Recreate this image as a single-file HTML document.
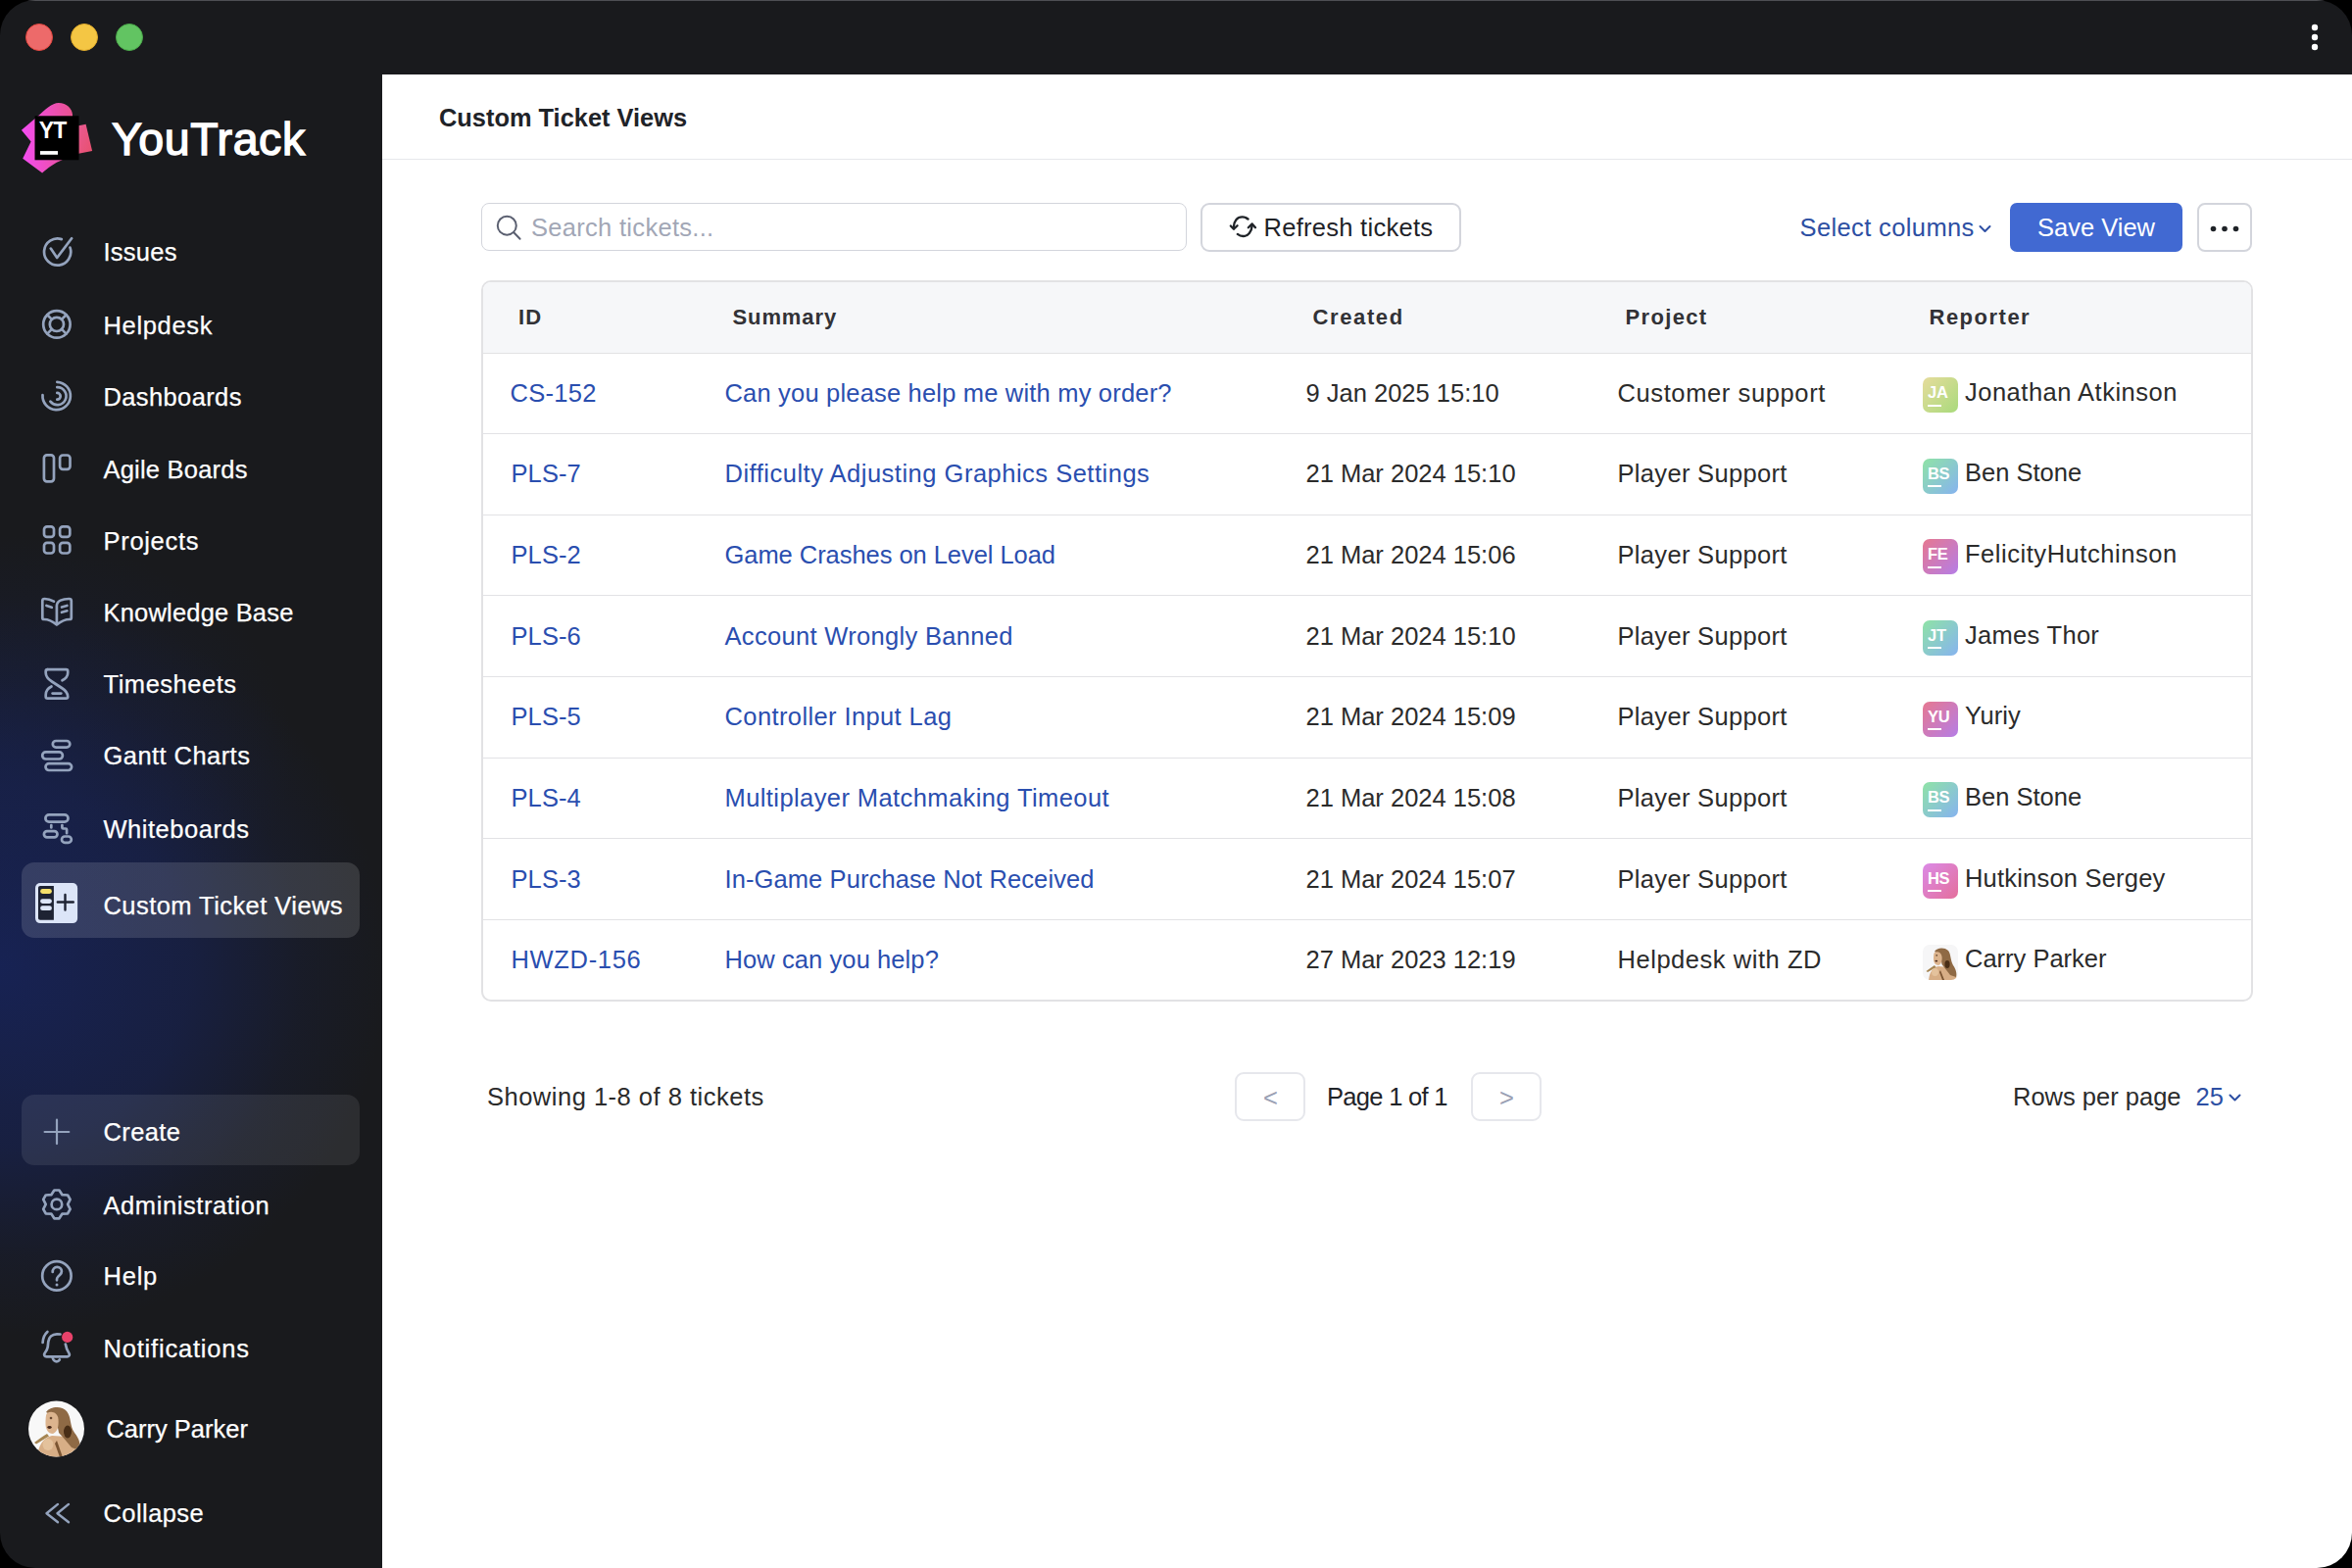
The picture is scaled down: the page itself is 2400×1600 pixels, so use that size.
<!DOCTYPE html>
<html>
<head>
<meta charset="utf-8">
<style>
*{box-sizing:border-box;margin:0;padding:0}
html,body{width:2400px;height:1600px;overflow:hidden;background:#000}
body{font-family:"Liberation Sans",sans-serif;position:relative}
.win{position:absolute;left:0;top:0;width:2400px;height:1600px;border-radius:36px;overflow:hidden;background:#191a1d}
.topline{position:absolute;left:0;top:0;width:2400px;height:1px;background:#4e4f54}
.tl{position:absolute;width:28px;height:28px;border-radius:50%;top:24px}
.side{position:absolute;left:0;top:76px;width:390px;height:1524px;overflow:hidden}
.glow{position:absolute;left:-430px;top:500px;width:860px;height:820px;border-radius:50%;
 background:radial-gradient(closest-side,rgba(23,35,88,0.92),rgba(23,35,88,0.6) 45%,rgba(23,35,88,0.18) 72%,rgba(23,35,88,0) 92%)}
.ni{position:absolute;left:0;width:390px;height:40px}
.ni svg{position:absolute;left:36px;top:0;width:44px;height:40px;overflow:visible}
.ni .t{position:absolute;left:106px;top:7px;font-size:26px;line-height:26px;color:#fff;white-space:nowrap}
.ic{fill:none;stroke:#94a3bd;stroke-width:2.7;stroke-linecap:round;stroke-linejoin:round}
.nt{position:absolute;left:105.5px;font-size:25.5px;line-height:26px;color:#fff;white-space:nowrap;-webkit-text-stroke:0.25px #fff}
.tx{font-size:25.5px;line-height:26px}
.td{font-size:25.5px;line-height:26px;color:#2b2b2b}
.lk{color:#2a4eaf}
.th{font-size:22px;line-height:26px;font-weight:700;letter-spacing:1.2px;color:#323236}
.av{width:36px;height:36px;border-radius:7px;overflow:hidden}
.av span{position:absolute;left:5px;top:7px;font-size:16.5px;line-height:16px;font-weight:700;color:#fff;letter-spacing:-0.3px}
.av i{position:absolute;left:5px;top:27.5px;width:14px;height:2px;background:#fff}
.main{position:absolute;left:390px;top:76px;width:2010px;height:1524px;background:#fff}
.abs{position:absolute;white-space:nowrap}
</style>
</head>
<body>
<div class="win">
  <div class="topline"></div>
  <div class="tl" style="left:26px;background:#ed6a6a;border:1px solid #e2463f"></div>
  <div class="tl" style="left:72px;background:#f4c644;border:1px solid #dea92a"></div>
  <div class="tl" style="left:118px;background:#62c462;border:1px solid #4aa84a"></div>
  <svg class="abs" style="left:2352px;top:20px" width="20" height="36" viewBox="0 0 20 36">
    <circle cx="10" cy="8" r="3.2" fill="#fff"/><circle cx="10" cy="18" r="3.2" fill="#fff"/><circle cx="10" cy="28" r="3.2" fill="#fff"/>
  </svg>


  <div class="side"><div class="glow"></div><div style="position:absolute;left:-300px;top:470px;width:600px;height:440px;border-radius:50%;background:radial-gradient(closest-side,rgba(23,35,88,0.35),rgba(23,35,88,0.15) 60%,rgba(23,35,88,0) 100%)"></div></div>
  <!-- logo -->
  <svg class="abs" style="left:18px;top:100px" width="82" height="82" viewBox="0 0 82 82">
    <defs>
      <linearGradient id="lg1" x1="0" y1="0" x2="1" y2="0"><stop offset="0" stop-color="#f34cf2"/><stop offset="1" stop-color="#e9528f"/></linearGradient>
      <linearGradient id="lg2" x1="0" y1="0" x2="1" y2="1"><stop offset="0" stop-color="#ea5a92"/><stop offset="1" stop-color="#e8506e"/></linearGradient>
    </defs>
    <path d="M3.9 32.7 L20.9 18.3 C28 12 35 5 41.8 5 C50 5 56 11 56 17.3 L56 40 L45.5 63.3 C38 66 30 72 25.1 76.6 L5.2 61.7 L13.6 44.5 Z" fill="url(#lg1)"/>
    <path d="M62.2 28.2 L69.6 26.7 L76.1 53.9 L62.2 56.7 Z" fill="url(#lg2)"/>
    <rect x="17.5" y="18.3" width="45" height="45" fill="#000"/>
    <text x="21.8" y="41.2" font-family="Liberation Sans" font-size="23" font-weight="700" fill="#fff" letter-spacing="-0.8">YT</text>
    <rect x="23" y="54.1" width="18" height="3.7" fill="#fff"/>
  </svg>
  <div class="abs" style="left:114px;top:118.5px;font-size:46.5px;line-height:46px;font-weight:400;color:#fff;letter-spacing:0.6px;-webkit-text-stroke:1.4px #fff">YouTrack</div>

  <!-- nav items -->
  <svg class="abs ic" style="left:36px;top:236px" width="44" height="44" viewBox="0 0 44 44">
    <path d="M26.8 8.1 A13.6 13.6 0 1 0 35.5 16.6" /><path d="M15.8 17.6 L22.2 27 L37.1 7.3"/>
  </svg>
  <div class="abs nt" style="top:243.5px;letter-spacing:0.26px">Issues</div>

  <svg class="abs ic" style="left:36px;top:310px" width="44" height="44" viewBox="0 0 44 44">
    <circle cx="21.9" cy="20.9" r="13.7"/><circle cx="21.9" cy="20.9" r="7.1"/>
    <path d="M12.2 11.2 L16.9 15.9 M31.6 11.2 L26.9 15.9 M12.2 30.6 L16.9 25.9 M31.6 30.6 L26.9 25.9"/>
  </svg>
  <div class="abs nt" style="top:318.5px;letter-spacing:0.66px">Helpdesk</div>

  <svg class="abs ic" style="left:36px;top:384px" width="44" height="44" viewBox="0 0 44 44">
    <path d="M22.3 5.8 A14.2 14.2 0 1 1 7.5 19" /><path d="M22.3 11.1 A9 9 0 1 1 15.4 25.6"/><path d="M22.3 16.9 A3.4 3.4 0 0 1 22.3 23.7"/>
  </svg>
  <div class="abs nt" style="top:391.5px;letter-spacing:0.38px">Dashboards</div>

  <svg class="abs ic" style="left:36px;top:456px" width="44" height="44" viewBox="0 0 44 44">
    <rect x="8.9" y="8.3" width="10.1" height="27" rx="3"/><rect x="25.1" y="8.5" width="10.4" height="14.3" rx="3"/>
  </svg>
  <div class="abs nt" style="top:465.5px;letter-spacing:0.21px">Agile Boards</div>

  <svg class="abs ic" style="left:36px;top:530px" width="44" height="44" viewBox="0 0 44 44">
    <rect x="9" y="7.3" width="10" height="10.6" rx="3"/><rect x="25.1" y="7.3" width="10.2" height="10.6" rx="3"/>
    <rect x="9" y="23.8" width="10" height="10.7" rx="3"/><rect x="25.1" y="23.8" width="10.2" height="10.7" rx="3"/>
  </svg>
  <div class="abs nt" style="top:538.5px;letter-spacing:0.69px">Projects</div>

  <svg class="abs ic" style="left:36px;top:604px" width="44" height="44" viewBox="0 0 44 44">
    <path d="M18.9 9.7 C16 8 13 7 9.5 7 C8 7 7.3 7.8 7.3 9 L7.3 26.5 C7.3 27.5 8 28 9 28 C13 28 17 29.5 21.9 33.5 C26.8 29.5 31 28 35 28 C36 28 36.8 27.5 36.8 26.5 L36.8 9 C36.8 7.8 36 7 34.5 7 C28 7 21.9 9 21.9 14.3 L21.9 33.5"/>
    <path d="M11.4 14 L16.8 15.8 M27 15.5 L32.4 14 M27 20.8 L32.4 19.3"/>
  </svg>
  <div class="abs nt" style="top:612.2px;letter-spacing:0.19px">Knowledge Base</div>

  <svg class="abs ic" style="left:36px;top:678px" width="44" height="44" viewBox="0 0 44 44">
    <path d="M12.5 5.1 L31.4 5.1 C32.6 5.1 33.2 5.8 33.2 7 L33.2 8.5 C33.2 12 30.5 14.8 27.5 16.3"/>
    <path d="M12.5 5.1 C11.4 5.1 10.7 5.8 10.7 7 L10.7 8.5 C10.7 13 13 15 17 17.5 L27 24 C31 26.5 33.2 29 33.2 33 C33.2 34.2 32.5 34.7 31.4 34.7 L12.5 34.7 C11.4 34.7 10.7 34.2 10.7 33 L10.7 31 C10.7 27 13.5 24 16.5 22.5"/>
    <path d="M17.6 29.6 L26.3 29.6"/>
  </svg>
  <div class="abs nt" style="top:684.9px;letter-spacing:0.53px">Timesheets</div>

  <svg class="abs ic" style="left:36px;top:751px" width="44" height="44" viewBox="0 0 44 44">
    <rect x="17.8" y="5" width="17.5" height="6.6" rx="3.3"/><rect x="7.2" y="16.4" width="20.7" height="7.1" rx="3.5"/><rect x="10.5" y="28.2" width="26.6" height="6.8" rx="3.4"/>
  </svg>
  <div class="abs nt" style="top:757.5px;letter-spacing:0.44px">Gantt Charts</div>

  <svg class="abs ic" style="left:36px;top:825px" width="44" height="44" viewBox="0 0 44 44">
    <rect x="10.4" y="6.3" width="23.1" height="7.3" rx="3.6"/><rect x="8.9" y="23.1" width="13.6" height="6.3" rx="3.1"/><rect x="27" y="28.5" width="9.8" height="6.3" rx="3.1"/>
    <path d="M16.3 17 L16.3 19.4 M27.4 17 L27.4 19.5 C27.4 20.2 27.8 20.5 28.5 20.5 L31 20.5 C31.7 20.5 32.1 20.9 32.1 21.6 L32.1 25.2"/>
  </svg>
  <div class="abs nt" style="top:832.5px;letter-spacing:0.53px">Whiteboards</div>

  <div class="abs" style="left:22px;top:879.5px;width:345px;height:77.2px;border-radius:13px;background:rgba(255,255,255,0.135)"></div>
  <svg class="abs" style="left:30px;top:896px" width="56" height="52" viewBox="0 0 56 52">
    <rect x="6" y="5" width="43.1" height="41.1" rx="5" fill="#dce5f8"/>
    <path d="M11 8.1 L24.9 8.1 L24.9 42.8 L11 42.8 C9.8 42.8 9 42 9 40.8 L9 10.1 C9 8.9 9.8 8.1 11 8.1Z" fill="#1e2333"/>
    <rect x="11.1" y="11.1" width="11.8" height="4.8" rx="2.4" fill="#f5e06a"/>
    <rect x="11.1" y="21.2" width="11.8" height="4.7" rx="2.35" fill="#dce5f8"/>
    <rect x="11.1" y="28.3" width="11.8" height="4.7" rx="2.35" fill="#dce5f8"/>
    <path d="M28.8 24.5 L44.8 24.5 M36.5 16.9 L36.5 32.5" stroke="#1e2333" stroke-width="2.4" stroke-linecap="round" fill="none"/>
  </svg>
  <div class="abs nt" style="top:910.5px;letter-spacing:0.44px">Custom Ticket Views</div>

  <div class="abs" style="left:22px;top:1117px;width:345px;height:71.6px;border-radius:13px;background:rgba(255,255,255,0.085)"></div>
  <svg class="abs ic" style="left:36px;top:1132px" width="44" height="44" viewBox="0 0 44 44">
    <path d="M22 10.7 L22 35.1 M9.6 23 L34.3 23" style="stroke-width:2.2"/>
  </svg>
  <div class="abs nt" style="top:1142.2px;letter-spacing:0.4px">Create</div>

  <svg class="abs ic" style="left:36px;top:1207px" width="44" height="44" viewBox="0 0 44 44">
    <path d="M19.36 7.52 L24.44 7.52 L27.50 12.20 L33.08 12.52 L35.62 16.91 L33.10 21.90 L35.62 26.89 L33.08 31.28 L27.50 31.60 L24.44 36.28 L19.36 36.28 L16.30 31.60 L10.72 31.28 L8.18 26.89 L10.70 21.90 L8.18 16.91 L10.72 12.52 L16.30 12.20Z"/>
    <circle cx="21.9" cy="21.9" r="5.3"/>
  </svg>
  <div class="abs nt" style="top:1216.5px;letter-spacing:0.58px">Administration</div>

  <svg class="abs ic" style="left:36px;top:1280px" width="44" height="44" viewBox="0 0 44 44">
    <circle cx="21.9" cy="21.9" r="14.7"/>
    <path d="M17.7 18 C17.7 15 19.6 12.9 22.3 12.9 C25 12.9 26.9 14.8 26.9 17.2 C26.9 18.7 26.3 19.7 25.2 20.8 L23.1 22.9 C22.3 23.7 22 24.3 22 25.5 L22 26.3"/>
    <circle cx="22" cy="31" r="1.5" style="fill:#94a3bd;stroke:none"/>
  </svg>
  <div class="abs nt" style="top:1289.0px;letter-spacing:0.77px">Help</div>

  <svg class="abs ic" style="left:36px;top:1352px" width="44" height="44" viewBox="0 0 44 44">
    <path d="M12.4 7 C9.5 9.5 7.8 13.5 7.6 18"/>
    <path d="M25.5 9.5 C24.3 9.3 23.2 9.3 22 9.3 C17 9.3 13.8 12.5 13.3 17 L12.7 22.5 C12.4 25 11 27 9.5 29 C8.5 30.5 9.5 32.3 11.5 32.3 L32.8 32.3 C34.6 32.3 35.5 30.5 34.5 29 C33 27 31.5 23.5 30.8 19.5"/>
    <path d="M17.5 33 C18.3 35.8 19.8 37.3 21.8 37.3 C23 37.3 24.1 36.6 24.8 35.5"/>
    <circle cx="32.7" cy="12.4" r="5.6" style="fill:#e8426a;stroke:none"/>
  </svg>
  <div class="abs nt" style="top:1362.5px;letter-spacing:0.8px">Notifications</div>

  <svg class="abs" style="left:29px;top:1429px" width="57" height="58" viewBox="0 0 57 58">
    <defs><clipPath id="avc"><circle cx="28.5" cy="29" r="28.5"/></clipPath><filter id="bl1"><feGaussianBlur stdDeviation="0.7"/></filter></defs>
    <g clip-path="url(#avc)">
      <rect width="57" height="58" fill="#f8f8f8"/><g filter="url(#bl1)">
      <path d="M8 60 C10 46 15 38 24 36 L40 37 C49 40 54 47 56 60 Z" fill="#d7ae86"/>
      <path d="M18 12 C22 6 34 5 39 11 C44 17 42 26 47 33 C52 39 54 46 52 51 L44 48 C39 42 35 37 31 33 C30 24 26 15 18 12Z" fill="#8f6a45"/>
      <ellipse cx="40" cy="32" rx="4" ry="6.5" fill="#4a2e18"/>
      <path d="M19 13 C24 10 30 13 30.5 19 C31 26 30 32 25 34 C20 34 17.5 29 17.5 24 C17.5 19 17.5 15 19 13Z" fill="#dcb48e"/>
      <circle cx="23" cy="18" r="1.3" fill="#6a4a30"/>
      <ellipse cx="21.5" cy="27.5" rx="2.2" ry="1.4" fill="#4a2a1a"/>
      <path d="M19 34 C14 37 10 40 6 43 L8 44.5 C12.5 42 16.5 39 21 36.5Z" fill="#a58552"/>
      <ellipse cx="20" cy="45" rx="5.5" ry="6" fill="#e4c29c"/>
      <path d="M29 41 L35 58 L32 58 L27 44Z" fill="#7a5432"/>
    </g></g>
  </svg>
  <div class="abs nt" style="top:1445.1px;left:108.4px;letter-spacing:0px">Carry Parker</div>

  <svg class="abs ic" style="left:36px;top:1522px" width="44" height="44" viewBox="0 0 44 44">
    <path d="M23 12.9 L11.5 22.2 L23 31.2 M34 12.9 L22.5 22.2 L34 31.2" style="stroke-width:2.4"/>
  </svg>
  <div class="abs nt" style="top:1530.5px;letter-spacing:0.43px">Collapse</div>

  
  <div class="main"></div>
  <div class="abs" style="left:448px;top:106.6px;font-size:25.4px;line-height:26px;font-weight:700;color:#1f2328">Custom Ticket Views</div>
  <div class="abs" style="left:390px;top:161.5px;width:2010px;height:1.5px;background:#e6e7eb"></div>

  <div class="abs" style="left:491px;top:207px;width:720px;height:49px;border:1.5px solid #d3d5dc;border-radius:8px"></div>
  <svg class="abs" style="left:496px;top:210px" width="44" height="44" viewBox="0 0 44 44" fill="none" stroke="#5a5f70" stroke-width="2" stroke-linecap="round">
    <circle cx="21.3" cy="20.2" r="9.5"/><path d="M28.3 27.3 L34.6 33.8"/>
  </svg>
  <div class="abs tx" style="left:542px;top:218.8px;color:#a2a7b6;letter-spacing:0.3px">Search tickets...</div>

  <div class="abs" style="left:1225px;top:207px;width:266px;height:50px;border:2px solid #d3d5dc;border-radius:9px"></div>
  <svg class="abs" style="left:1246px;top:210px" width="44" height="44" viewBox="0 0 44 44" fill="none" stroke="#1f2328" stroke-width="2.3" stroke-linecap="round" stroke-linejoin="round">
    <path d="M27.5 13.5 C25.5 12 23.5 11.3 21.5 11.3 C16.5 11.3 13 15.5 12.9 21.5"/><path d="M9.8 20.5 L12.9 23.8 L16.6 20.2"/>
    <path d="M16.8 28.9 C18.5 30.3 20.5 31 22.5 31 C27.5 31 31.2 26.5 31.7 19.8"/><path d="M27.8 22.2 L31.7 18.4 L35 22.2"/>
  </svg>
  <div class="abs tx" style="left:1289.5px;top:218.5px;color:#1f2328;letter-spacing:0.28px">Refresh tickets</div>

  <div class="abs tx" style="left:1836.5px;top:219px;color:#2d4fa3;letter-spacing:0.38px">Select columns</div>
  <svg class="abs" style="left:2017px;top:222px" width="18" height="20" viewBox="0 0 18 20" fill="none" stroke="#2d4fa3" stroke-width="2" stroke-linecap="round" stroke-linejoin="round"><path d="M3.5 9 L8.5 14 L13.5 9"/></svg>
  <div class="abs" style="left:2051px;top:207px;width:176px;height:49.5px;border-radius:7px;background:#4169d2"></div>
  <div class="abs tx" style="left:2079px;top:219px;color:#fff">Save View</div>
  <div class="abs" style="left:2242px;top:206.5px;width:56px;height:50px;border:2px solid #d3d5dc;border-radius:8px"></div>
  <svg class="abs" style="left:2242px;top:206.5px" width="56" height="50" viewBox="0 0 56 50"><circle cx="16.5" cy="26.5" r="2.8" fill="#1f2328"/><circle cx="28" cy="26.5" r="2.8" fill="#1f2328"/><circle cx="39.5" cy="26.5" r="2.8" fill="#1f2328"/></svg>

  <div class="abs" style="left:491px;top:286px;width:1808px;height:736px;border:2px solid #e2e2e4;border-radius:10px;overflow:hidden">
    <div style="position:absolute;left:0;top:0;width:100%;height:73px;background:#f6f7f9;border-bottom:1px solid #e2e2e4"></div>
  </div>
  <div class="abs th" style="left:529px;top:311.3px">ID</div>
  <div class="abs th" style="left:747.5px;top:311.3px;letter-spacing:0.9px">Summary</div>
  <div class="abs th" style="left:1339.5px;top:311.3px;letter-spacing:1.62px">Created</div>
  <div class="abs th" style="left:1658.5px;top:311.3px;letter-spacing:1.35px">Project</div>
  <div class="abs th" style="left:1968.5px;top:311.3px;letter-spacing:1.5px">Reporter</div>
<div class="abs td lk" style="left:520.5px;top:387.60px;letter-spacing:0.3px">CS-152</div>
<div class="abs td lk" style="left:739.5px;top:387.60px;letter-spacing:0.186px">Can you please help me with my order?</div>
<div class="abs td" style="left:1332.5px;top:387.60px">9 Jan 2025 15:10</div>
<div class="abs td" style="left:1650.5px;top:387.60px;letter-spacing:0.61px">Customer support</div>
<div class="abs av" style="left:1962px;top:385.00px;background:linear-gradient(135deg,#e6dc9c,#a9da7c)"><span>JA</span><i></i></div>
<div class="abs td" style="left:2005px;top:386.70px;letter-spacing:0.5px">Jonathan Atkinson</div>
<div class="abs td lk" style="left:521.5px;top:470.25px;letter-spacing:0.1px">PLS-7</div>
<div class="abs td lk" style="left:739.5px;top:470.25px;letter-spacing:0.5px">Difficulty Adjusting Graphics Settings</div>
<div class="abs td" style="left:1332.5px;top:470.25px">21 Mar 2024 15:10</div>
<div class="abs td" style="left:1650.5px;top:470.25px;letter-spacing:0.32px">Player Support</div>
<div class="abs av" style="left:1962px;top:467.65px;background:linear-gradient(135deg,#8fe3a6,#86b3ef)"><span>BS</span><i></i></div>
<div class="abs td" style="left:2005px;top:469.35px;letter-spacing:0px">Ben Stone</div>
<div class="abs td lk" style="left:521.5px;top:552.90px;letter-spacing:0.1px">PLS-2</div>
<div class="abs td lk" style="left:739.5px;top:552.90px;letter-spacing:-0.05px">Game Crashes on Level Load</div>
<div class="abs td" style="left:1332.5px;top:552.90px">21 Mar 2024 15:06</div>
<div class="abs td" style="left:1650.5px;top:552.90px;letter-spacing:0.32px">Player Support</div>
<div class="abs av" style="left:1962px;top:550.30px;background:linear-gradient(135deg,#e67890,#b57de6)"><span>FE</span><i></i></div>
<div class="abs td" style="left:2005px;top:552.00px;letter-spacing:0.54px">FelicityHutchinson</div>
<div class="abs td lk" style="left:521.5px;top:635.55px;letter-spacing:0.1px">PLS-6</div>
<div class="abs td lk" style="left:739.5px;top:635.55px;letter-spacing:0.32px">Account Wrongly Banned</div>
<div class="abs td" style="left:1332.5px;top:635.55px">21 Mar 2024 15:10</div>
<div class="abs td" style="left:1650.5px;top:635.55px;letter-spacing:0.32px">Player Support</div>
<div class="abs av" style="left:1962px;top:632.95px;background:linear-gradient(135deg,#8fe3a6,#86b3ef)"><span>JT</span><i></i></div>
<div class="abs td" style="left:2005px;top:634.65px;letter-spacing:0.3px">James Thor</div>
<div class="abs td lk" style="left:521.5px;top:718.20px;letter-spacing:0.1px">PLS-5</div>
<div class="abs td lk" style="left:739.5px;top:718.20px;letter-spacing:0.39px">Controller Input Lag</div>
<div class="abs td" style="left:1332.5px;top:718.20px">21 Mar 2024 15:09</div>
<div class="abs td" style="left:1650.5px;top:718.20px;letter-spacing:0.32px">Player Support</div>
<div class="abs av" style="left:1962px;top:715.60px;background:linear-gradient(135deg,#e67890,#b57de6)"><span>YU</span><i></i></div>
<div class="abs td" style="left:2005px;top:717.30px;letter-spacing:0px">Yuriy</div>
<div class="abs td lk" style="left:521.5px;top:800.85px;letter-spacing:0.1px">PLS-4</div>
<div class="abs td lk" style="left:739.5px;top:800.85px;letter-spacing:0.41px">Multiplayer Matchmaking Timeout</div>
<div class="abs td" style="left:1332.5px;top:800.85px">21 Mar 2024 15:08</div>
<div class="abs td" style="left:1650.5px;top:800.85px;letter-spacing:0.32px">Player Support</div>
<div class="abs av" style="left:1962px;top:798.25px;background:linear-gradient(135deg,#8fe3a6,#86b3ef)"><span>BS</span><i></i></div>
<div class="abs td" style="left:2005px;top:799.95px;letter-spacing:0px">Ben Stone</div>
<div class="abs td lk" style="left:521.5px;top:883.50px;letter-spacing:0.1px">PLS-3</div>
<div class="abs td lk" style="left:739.5px;top:883.50px;letter-spacing:0.1px">In-Game Purchase Not Received</div>
<div class="abs td" style="left:1332.5px;top:883.50px">21 Mar 2024 15:07</div>
<div class="abs td" style="left:1650.5px;top:883.50px;letter-spacing:0.32px">Player Support</div>
<div class="abs av" style="left:1962px;top:880.90px;background:linear-gradient(135deg,#db8ae6,#e46f9c)"><span>HS</span><i></i></div>
<div class="abs td" style="left:2005px;top:882.60px;letter-spacing:0.2px">Hutkinson Sergey</div>
<div class="abs td lk" style="left:521.5px;top:966.15px;letter-spacing:0.67px">HWZD-156</div>
<div class="abs td lk" style="left:739.5px;top:966.15px;letter-spacing:0.09px">How can you help?</div>
<div class="abs td" style="left:1332.5px;top:966.15px">27 Mar 2023 12:19</div>
<div class="abs td" style="left:1650.5px;top:966.15px;letter-spacing:0.54px">Helpdesk with ZD</div>
<svg class="abs" style="left:1962px;top:963.55px" width="36" height="36" viewBox="0 0 36 36">
      <defs><clipPath id="avt"><rect width="36" height="36" rx="7"/></clipPath><filter id="bl2"><feGaussianBlur stdDeviation="0.5"/></filter></defs>
      <g clip-path="url(#avt)"><rect width="36" height="36" fill="#f6f6f7"/><g filter="url(#bl2)">
      <path d="M6 36 C7 28 10 23 16 22 L26 23 C31 25 34 29 35 36 Z" fill="#d7ae86"/>
      <path d="M12 7 C14 3 22 2 26 6 C29 10 28 16 31 21 C34 25 35 30 34 33 L28 31 C25 27 22 23 19.5 20 C19 14 17 9 12 7Z" fill="#8f6a45"/>
      <ellipse cx="25" cy="20" rx="2.6" ry="4" fill="#4a2e18"/>
      <path d="M12 8 C15 6 19 8 19.5 12 C20 16 19 20 16 21 C13 21 11 18 11 15 C11 12 11 9 12 8Z" fill="#dcb48e"/>
      <circle cx="14.2" cy="10.8" r="0.9" fill="#6a4a30"/>
      <ellipse cx="13.8" cy="16.6" rx="1.4" ry="0.9" fill="#4a2a1a"/>
      <path d="M12 21 C9 23 6 25 3.5 27 L5 28 C8 26.5 10.5 24.5 13.5 23Z" fill="#a58552"/>
      <ellipse cx="12.5" cy="28" rx="3.5" ry="4" fill="#e4c29c"/>
      <path d="M18 26 L22 36 L20 36 L17 28Z" fill="#7a5432"/>
      </g></g></svg>
<div class="abs td" style="left:2005px;top:965.25px;letter-spacing:0px">Carry Parker</div>
<div class="abs" style="left:492px;top:442px;width:1806px;height:1px;background:#e2e2e5"></div>
<div class="abs" style="left:492px;top:525px;width:1806px;height:1px;background:#e2e2e5"></div>
<div class="abs" style="left:492px;top:607px;width:1806px;height:1px;background:#e2e2e5"></div>
<div class="abs" style="left:492px;top:690px;width:1806px;height:1px;background:#e2e2e5"></div>
<div class="abs" style="left:492px;top:773px;width:1806px;height:1px;background:#e2e2e5"></div>
<div class="abs" style="left:492px;top:855px;width:1806px;height:1px;background:#e2e2e5"></div>
<div class="abs" style="left:492px;top:938px;width:1806px;height:1px;background:#e2e2e5"></div>

  <div class="abs tx" style="left:497px;top:1106px;color:#2b2b2b;letter-spacing:0.5px">Showing 1-8 of 8 tickets</div>
  <div class="abs" style="left:1260px;top:1094px;width:72px;height:50px;border:2px solid #e6e7ec;border-radius:9px"></div>
  <div class="abs tx" style="left:1289px;top:1107px;color:#9aa0b4">&lt;</div>
  <div class="abs tx" style="left:1354px;top:1105.8px;color:#1f2328;letter-spacing:-0.7px">Page 1 of 1</div>
  <div class="abs" style="left:1501px;top:1094px;width:72px;height:50px;border:2px solid #e6e7ec;border-radius:9px"></div>
  <div class="abs tx" style="left:1530px;top:1107px;color:#9aa0b4">&gt;</div>
  <div class="abs tx" style="left:2054px;top:1106px;color:#2b2b2b">Rows per page</div>
  <div class="abs tx" style="left:2240.5px;top:1106px;color:#2d4fa3">25</div>
  <svg class="abs" style="left:2272px;top:1111px" width="18" height="20" viewBox="0 0 18 20" fill="none" stroke="#2d4fa3" stroke-width="2" stroke-linecap="round" stroke-linejoin="round"><path d="M3.5 6.5 L8.5 11.5 L13.5 6.5"/></svg>

</div>
</body>
</html>
